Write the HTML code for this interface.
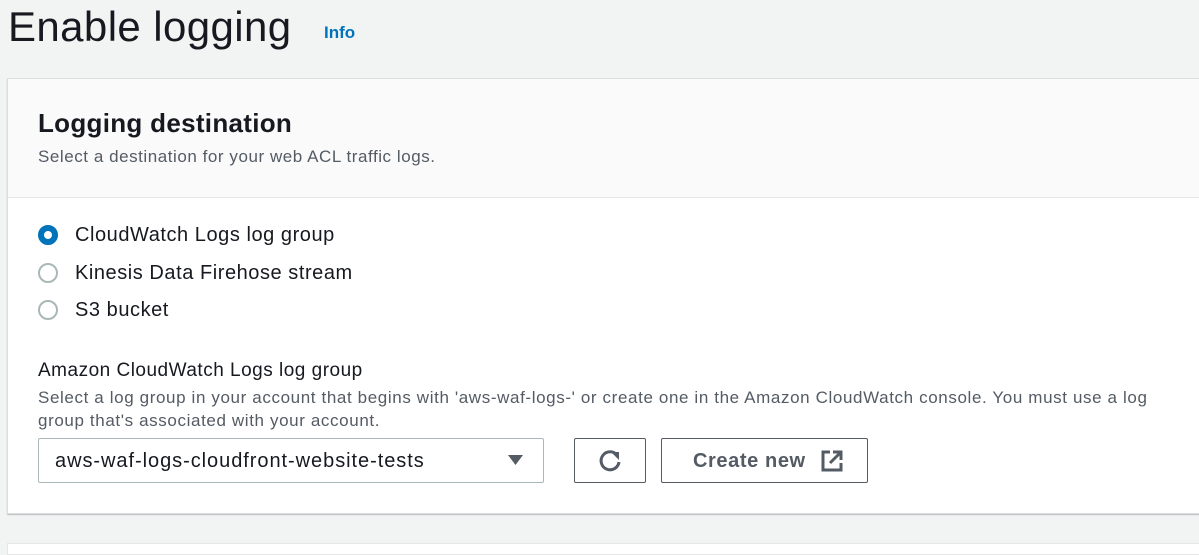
<!DOCTYPE html>
<html><head><style>
body{margin:0;width:1199px;height:548px;background:#f2f3f3;font-family:"Liberation Sans",sans-serif;color:#16191f;position:relative;overflow:hidden}
.a{position:absolute;white-space:nowrap}
.card{position:absolute;left:7px;top:78px;width:1200px;height:434px;background:#fff;border:1px solid #dcdcdc;box-shadow:0 1px 1px rgba(0,32,64,.25)}
.hdr{position:absolute;left:0;top:0;right:0;height:118px;background:#fafafa;border-bottom:1px solid #e6e6e6}
.r{position:absolute;left:38px;width:20px;height:20px;border-radius:50%;box-sizing:border-box;border:2px solid #aab7b8;background:#fff}
.r.on{border:6px solid #0073bb}
.btn{position:absolute;box-sizing:border-box;border:1px solid #545b64;border-radius:2px;background:#fff}
</style></head><body>
<div class="a" style="left:8px;top:3px;font-size:42px;letter-spacing:0.4px">Enable logging</div>
<div class="a" style="left:324px;top:23px;font-size:17px;font-weight:bold;color:#0073bb">Info</div>
<div class="card"><div class="hdr"></div></div>
<div class="a" style="left:38px;top:108px;font-size:26px;font-weight:bold;letter-spacing:0.3px">Logging destination</div>
<div class="a" style="left:38px;top:147px;font-size:17px;color:#545b64;letter-spacing:0.55px">Select a destination for your web ACL traffic logs.</div>
<div class="r on" style="top:225px"></div>
<div class="a" style="left:75px;top:224px;font-size:20px;letter-spacing:0.55px">CloudWatch Logs log group</div>
<div class="r" style="top:263px"></div>
<div class="a" style="left:75px;top:262px;font-size:20px;letter-spacing:0.55px">Kinesis Data Firehose stream</div>
<div class="r" style="top:300px"></div>
<div class="a" style="left:75px;top:299px;font-size:20px;letter-spacing:0.55px">S3 bucket</div>
<div class="a" style="left:38px;top:360px;font-size:19px;letter-spacing:0.5px">Amazon CloudWatch Logs log group</div>
<div class="a" style="left:38px;top:386px;font-size:17px;color:#545b64;line-height:23px;letter-spacing:0.62px">Select a log group in your account that begins with 'aws-waf-logs-' or create one in the Amazon CloudWatch console. You must use a log<br>group that's associated with your account.</div>
<div class="btn" style="left:38px;top:438px;width:506px;height:45px;border-color:#aab7b8"></div>
<div class="a" style="left:55px;top:450px;font-size:20px;letter-spacing:0.95px">aws-waf-logs-cloudfront-website-tests</div>
<svg class="a" style="left:507px;top:454px" width="17" height="12"><path d="M1 1H16L8.5 11Z" fill="#545b64"/></svg>
<div class="btn" style="left:574px;top:438px;width:72px;height:45px"></div>
<svg class="a" style="left:597px;top:448px" width="26" height="26" viewBox="0 0 26 26"><path d="M20 7A9 9 0 1 0 22 14" fill="none" stroke="#545b64" stroke-width="3"/><path d="M14 4H22V12Z" fill="#545b64"/></svg>
<div class="btn" style="left:661px;top:438px;width:207px;height:45px"></div>
<div class="a" style="left:693px;top:450px;font-size:20px;font-weight:bold;color:#545b64;letter-spacing:0.6px">Create new</div>
<svg class="a" style="left:820px;top:449px" width="24" height="24" viewBox="0 0 24 24"><path d="M10 3H3V21H21V14" fill="none" stroke="#545b64" stroke-width="3"/><path d="M10 14L20 4M13 3H21V11" fill="none" stroke="#545b64" stroke-width="3"/></svg>
<div style="position:absolute;left:7px;top:543px;width:1200px;height:10px;background:#fff;border:1px solid #e6e6e6"></div>
</body></html>
